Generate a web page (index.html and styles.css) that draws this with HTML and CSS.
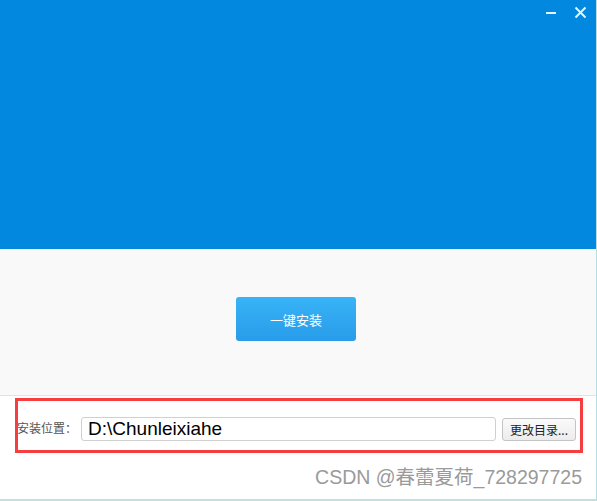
FILE: index.html
```html
<!DOCTYPE html>
<html lang="zh">
<head>
<meta charset="utf-8">
<title>安装</title>
<link rel="stylesheet" href="styles.css">
</head>
<body>
<div class="window">
  <div class="header">
    <div class="controls">
      <svg class="ctl ctl-min" width="12" height="12" viewBox="0 0 12 12"><rect x="1" y="5" width="10" height="2" fill="#e6f3fc"/></svg>
      <svg class="ctl ctl-close" width="13" height="13" viewBox="0 0 13 13"><path d="M1.5 1.5 L11.5 11.5 M11.5 1.5 L1.5 11.5" stroke="#e6f3fc" stroke-width="2" fill="none"/></svg>
    </div>
  </div>
  <div class="main">
    <button class="install">一键安装</button>
  </div>
  <div class="footer">
    <div class="row">
      <span class="label">安装位置：</span>
      <div class="path">D:\Chunleixiahe</div>
      <button class="browse">更改目录...</button>
    </div>
    <div class="highlight"></div>
    <div class="watermark">CSDN @春蕾夏荷_728297725</div>
  </div>
</div>
</body>
</html>
```
FILE: styles.css
```css
html, body {
  margin: 0;
  padding: 0;
  background: #ffffff;
}
.window {
  width: 596px;
  height: 499px;
  border-right: 1px solid #b5dfe3;
  border-bottom: 2px solid #c3e0dc;
  display: flex;
  flex-direction: column;
  font-family: "Liberation Sans", "Noto Sans CJK SC", sans-serif;
}
.header {
  height: 249px;
  background: #0289df;
  position: relative;
  flex: none;
}
.controls {
  display: flex;
  justify-content: flex-end;
  align-items: flex-start;
  padding: 6px 9px 0 0;
  gap: 17px;
}
.ctl-min {
  margin-top: 1px;
}
.main {
  flex: none;
  background: #f9f9f9;
  border-bottom: 1px solid #e2e2e2;
  display: flex;
  justify-content: center;
  align-items: flex-start;
  padding-right: 4px;
  box-sizing: border-box;
  height: 147px;
}
.install {
  margin-top: 48px;
  width: 120px;
  height: 44px;
  border: none;
  border-radius: 3px;
  background: linear-gradient(#38b3f7, #289ce9);
  color: #ffffff;
  font-family: "Noto Sans CJK SC", sans-serif;
  font-size: 13px;
  padding: 0;
}
.footer {
  flex: 1;
  position: relative;
  background: #ffffff;
}
.row {
  display: flex;
  align-items: center;
  margin-top: 21px;
  padding-left: 17px;
  height: 24px;
}
.label {
  width: 64px;
  font-family: "Noto Sans CJK SC", sans-serif;
  font-size: 12px;
  line-height: 20px;
  margin-top: -2px;
  color: #555555;
  flex: none;
}
.path {
  width: 415px;
  height: 24px;
  box-sizing: border-box;
  border: 1px solid #d0d0d0;
  border-radius: 3px;
  background: #ffffff;
  font-family: "Liberation Sans", sans-serif;
  font-size: 19px;
  line-height: 22px;
  color: #000000;
  padding-left: 6px;
  flex: none;
}
.browse {
  margin-left: 6px;
  width: 74px;
  height: 23px;
  border: 1px solid #c4c4c4;
  border-radius: 3px;
  background: linear-gradient(#fafafa, #ececec);
  font-family: "Noto Sans CJK SC", sans-serif;
  font-size: 12px;
  color: #222222;
  padding: 0;
  flex: none;
}
.highlight {
  position: absolute;
  left: 15px;
  top: 2px;
  width: 568px;
  height: 55px;
  box-sizing: border-box;
  border: 3px solid #f63d3f;
}
.watermark {
  text-align: right;
  padding-right: 14px;
  margin-top: 24px;
  font-size: 19.5px;
  line-height: 24px;
  color: #9a9a9a;
}
```
